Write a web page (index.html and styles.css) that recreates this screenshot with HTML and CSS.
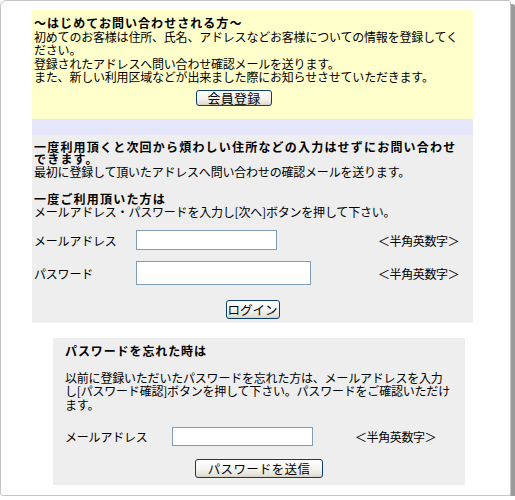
FILE: index.html
```html
<!DOCTYPE html>
<html lang="ja">
<head>
<meta charset="utf-8">
<title>お問い合わせ</title>
<link rel="stylesheet" href="styles.css">
</head>
<body>
<div class="frame">
  <div class="main">
    <section class="intro">
      <p class="text"><strong class="lead">〜はじめてお問い合わせされる方〜</strong><br>初めてのお客様は住所、氏名、アドレスなどお客様についての情報を登録してください。<br>登録されたアドレスへ問い合わせ確認メールを送ります。<br>また、新しい利用区域などが出来ました際にお知らせさせていただきます。</p>
      <div class="intro-btn-row"><button class="btn btn-register" type="button">会員登録</button></div>
    </section>
    <div class="band"></div>
    <section class="member">
      <p class="text member-text"><strong class="lead lead-wide">一度利用頂くと次回から煩わしい住所などの入力はせずにお問い合わせできます。</strong><br>最初に登録して頂いたアドレスへ問い合わせの確認メールを送ります。</p>
      <p class="text member-sub"><strong class="lead lead-wide">一度ご利用頂いた方は</strong><br>メールアドレス・パスワードを入力し[次へ]ボタンを押して下さい。</p>
      <div class="form-grid">
        <label class="lbl">メールアドレス</label>
        <div class="field"><input class="inp inp-mail" type="text"></div>
        <span class="hint">＜半角英数字＞</span>
        <label class="lbl">パスワード</label>
        <div class="field"><input class="inp inp-pass" type="password"></div>
        <span class="hint">＜半角英数字＞</span>
      </div>
      <div class="center-row login-row"><button class="btn btn-login" type="button">ログイン</button></div>
    </section>
  </div>
  <section class="forgot">
    <h3 class="forgot-title">パスワードを忘れた時は</h3>
    <p class="text forgot-text">以前に登録いただいたパスワードを忘れた方は、メールアドレスを入力し[パスワード確認]ボタンを押して下さい。パスワードをご確認いただけます。</p>
    <div class="forgot-grid">
      <label class="lbl">メールアドレス</label>
      <div class="field"><input class="inp inp-forgot" type="text"></div>
      <span class="hint">＜半角英数字＞</span>
    </div>
    <div class="center-row send-row"><button class="btn btn-send" type="button">パスワードを送信</button></div>
  </section>
</div>
</body>
</html>
```
FILE: styles.css
```css
html, body {
  margin: 0;
  padding: 0;
  background: #ffffff;
}
body {
  font-family: "Noto Sans CJK JP", "Noto Sans", sans-serif;
  font-size: 12px;
  color: #000;
}
.frame {
  box-sizing: border-box;
  width: 511px;
  height: 496px;
  border: 1px solid #c6c6c6;
  border-radius: 6px 3px 3px 3px;
  box-shadow: 4px 4px 0 #9a9a9a;
  padding-top: 9px;
}
.main {
  margin-left: 31px;
  width: 441px;
}
.text {
  margin: 0;
  line-height: 13.5px;
  letter-spacing: -0.2px;
}
.lead {
  font-size: 12px;
  font-weight: bold;
  letter-spacing: 1.05px;
}
.lead-wide {
  letter-spacing: 1.2px;
}
.intro {
  background: #ffffcc;
  height: 109px;
  box-sizing: border-box;
  padding: 6px 10px 0 2px;
}
.intro-btn-row {
  display: flex;
  padding-left: 162px;
  margin-top: 6.5px;
}
.btn {
  font-family: "Noto Sans CJK JP", "Noto Sans", sans-serif;
  font-size: 12.5px;
  color: #000;
  padding: 0;
  border: 1px solid #0a3d74;
  border-radius: 3px;
  background: linear-gradient(#ffffff 0%, #f4f3ee 55%, #e3e0d6 90%, #d4cfc2 100%);
  box-sizing: border-box;
  line-height: 14px;
  cursor: pointer;
}
.btn-register {
  width: 76px;
  height: 16px;
  font-size: 13px;
  letter-spacing: 0.3px;
}
.band {
  height: 16px;
  background: #e6e6fa;
}
.member {
  background: #eeeeee;
  height: 188px;
  box-sizing: border-box;
  padding: 5.75px 10px 0 2px;
}
.member-text {
  line-height: 12.5px;
}
.member-sub {
  margin-top: 13.25px;
}
.form-grid {
  display: grid;
  grid-template-columns: 102px 242px auto;
  row-gap: 11px;
  align-items: center;
  margin-top: 11.5px;
}
.lbl {
  letter-spacing: -0.2px;
}
.hint {
  letter-spacing: -0.4px;
}
.field {
  display: flex;
}
.inp {
  box-sizing: border-box;
  border: 1px solid #7f9db9;
  background: #fff;
  padding: 0 2px;
  margin: 0;
  font-size: 12px;
  outline: none;
}
.inp-mail {
  width: 141px;
  height: 20px;
}
.inp-pass {
  width: 175px;
  height: 24px;
}
.center-row {
  display: flex;
  justify-content: center;
}
.login-row {
  margin-top: 15px;
  padding-left: 8px;
}
.btn-login {
  width: 54px;
  height: 19px;
}
.forgot {
  margin: 15px 0 0 52px;
  width: 412px;
  height: 147px;
  box-sizing: border-box;
  background: #eeeeee;
  padding: 6px 12px 0 12px;
}
.forgot-title {
  margin: 0;
  font-size: 12px;
  font-weight: bold;
  line-height: 13.5px;
  letter-spacing: 0.9px;
}
.forgot-text {
  margin-top: 13px;
}
.forgot-grid {
  display: grid;
  grid-template-columns: 107px 183px auto;
  align-items: center;
  margin-top: 16px;
}
.inp-forgot {
  width: 141px;
  height: 19px;
}
.send-row {
  margin-top: 13px;
}
.btn-send {
  width: 128px;
  height: 19px;
  letter-spacing: 0.3px;
}
```
